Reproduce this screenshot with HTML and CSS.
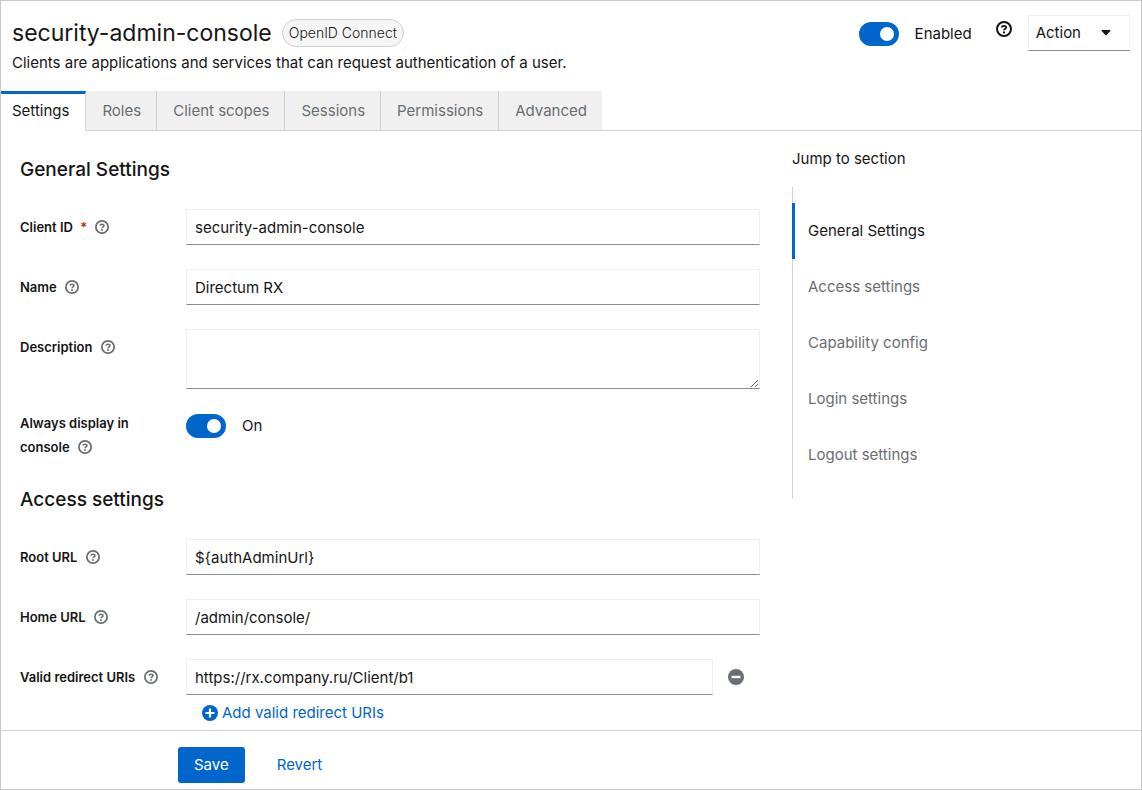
FILE: index.html
```html
<!DOCTYPE html>
<html lang="en">
<head>
    <meta charset="UTF-8">
    <meta name="viewport" content="width=device-width, initial-scale=1.0">
    <title>security-admin-console</title>
    <link rel="stylesheet" href="styles.css">
</head>
<body>
    <!-- Shared icons -->
    <svg class="sprite" aria-hidden="true">
        <symbol id="icon-help" viewBox="0 0 16 16">
            <circle cx="8" cy="8" r="7" fill="none" stroke="currentColor" stroke-width="2"/>
            <path d="M5.7 6.5C5.9 5.3 6.8 4.8 8 4.8c1.3 0 2.2.7 2.2 1.7C10.2 7.8 8 7.8 8 9.3" fill="none" stroke="currentColor" stroke-width="1.8"/>
            <circle cx="8" cy="11.4" r="1.1" fill="currentColor"/>
        </symbol>
        <symbol id="icon-plus" viewBox="0 0 16 16">
            <circle cx="8" cy="8" r="8" fill="currentColor"/>
            <path d="M8 3.5v9M3.5 8h9" stroke="#fff" stroke-width="2.2"/>
        </symbol>
        <symbol id="icon-minus" viewBox="0 0 16 16">
            <circle cx="8" cy="8" r="8" fill="currentColor"/>
            <path d="M3.5 8h9" stroke="#fff" stroke-width="2.4"/>
        </symbol>
    </svg>

    <div class="page">
        <header class="header">
            <div class="header-main">
                <div class="title-row">
                    <h1>security-admin-console</h1>
                    <span class="badge">OpenID Connect</span>
                </div>
                <p>Clients are applications and services that can request authentication of a user.</p>
            </div>
            <div class="header-tools">
                <label class="switch">
                    <input type="checkbox" checked>
                    <span>Enabled</span>
                </label>
                <button type="button" class="help help-large" aria-label="Help"><svg><use href="#icon-help"/></svg></button>
                <button type="button" class="action">Action
                    <svg viewBox="0 0 10 6"><path d="M0.8 0h8.4q.8 0 .3.8L5.7 5q-.7.7-1.4 0L.5.8Q0 0 .8 0z" fill="currentColor"/></svg>
                </button>
            </div>
        </header>

        <nav class="tabs">
            <a href="#settings" class="active">Settings</a>
            <a href="#roles">Roles</a>
            <a href="#scopes">Client scopes</a>
            <a href="#sessions">Sessions</a>
            <a href="#permissions">Permissions</a>
            <a href="#advanced">Advanced</a>
        </nav>

        <main class="content">
            <form id="client-form" class="form">
                <h2 id="general">General Settings</h2>

                <div class="row">
                    <div class="label">
                        <label for="client-id">Client ID <span class="required">*</span></label>
                        <button type="button" class="help" aria-label="Help for Client ID"><svg><use href="#icon-help"/></svg></button>
                    </div>
                    <input type="text" id="client-id" value="security-admin-console">
                </div>

                <div class="row">
                    <div class="label">
                        <label for="name">Name</label>
                        <button type="button" class="help" aria-label="Help for Name"><svg><use href="#icon-help"/></svg></button>
                    </div>
                    <input type="text" id="name" value="Directum RX">
                </div>

                <div class="row row-textarea">
                    <div class="label">
                        <label for="description">Description</label>
                        <button type="button" class="help" aria-label="Help for Description"><svg><use href="#icon-help"/></svg></button>
                    </div>
                    <textarea id="description"></textarea>
                </div>

                <div class="row row-switch">
                    <div class="label">
                        <label for="always-display">Always display in console</label>
                        <button type="button" class="help" aria-label="Help for Always display in console"><svg><use href="#icon-help"/></svg></button>
                    </div>
                    <label class="switch">
                        <input type="checkbox" id="always-display" checked>
                        <span>On</span>
                    </label>
                </div>

                <h2 id="access">Access settings</h2>

                <div class="row">
                    <div class="label">
                        <label for="root-url">Root URL</label>
                        <button type="button" class="help" aria-label="Help for Root URL"><svg><use href="#icon-help"/></svg></button>
                    </div>
                    <input type="text" id="root-url" value="${authAdminUrl}">
                </div>

                <div class="row">
                    <div class="label">
                        <label for="home-url">Home URL</label>
                        <button type="button" class="help" aria-label="Help for Home URL"><svg><use href="#icon-help"/></svg></button>
                    </div>
                    <input type="text" id="home-url" value="/admin/console/">
                </div>

                <div class="row">
                    <div class="label">
                        <label for="redirect-uri">Valid redirect URIs</label>
                        <button type="button" class="help" aria-label="Help for Valid redirect URIs"><svg><use href="#icon-help"/></svg></button>
                    </div>
                    <div>
                        <div class="uri">
                            <input type="text" id="redirect-uri" value="https://rx.company.ru/Client/b1">
                            <button type="button" class="remove" aria-label="Remove"><svg><use href="#icon-minus"/></svg></button>
                        </div>
                        <button type="button" class="add"><svg><use href="#icon-plus"/></svg>Add valid redirect URIs</button>
                    </div>
                </div>
            </form>

            <aside class="jump">
                <div class="jump-title">Jump to section</div>
                <nav class="jump-links">
                    <a href="#general" class="active">General Settings</a>
                    <a href="#access">Access settings</a>
                    <a href="#capability">Capability config</a>
                    <a href="#login">Login settings</a>
                    <a href="#logout">Logout settings</a>
                </nav>
            </aside>
        </main>

        <footer class="footer">
            <button type="submit" form="client-form" class="save">Save</button>
            <button type="reset" form="client-form" class="revert">Revert</button>
        </footer>
    </div>
</body>
</html>
```
FILE: styles.css
```css
* {
    box-sizing: border-box;
}
body {
    margin: 0;
    font-family: Inter, sans-serif;
    font-size: 15px;
    font-weight: 400;
    line-height: 24px;
    color: #151515;
}
h1, h2, p {
    margin: 0;
}
button, input, textarea {
    font: inherit;
    color: inherit;
}
button {
    padding: 0;
    border: none;
    background: none;
    cursor: pointer;
}
a {
    text-decoration: none;
}
svg {
    display: block;
    flex-shrink: 0;
    width: 16px;
    height: 16px;
}
.sprite {
    display: none;
}
.page {
    display: flex;
    flex-direction: column;
    height: 100vh;
    border: 1px solid #c8c8c8;
}

/* Header */
.header {
    display: flex;
    justify-content: space-between;
    padding: 14px 11px 16px;
}
.title-row {
    display: flex;
    align-items: center;
    gap: 10px;
    height: 36px;
}
h1 {
    font-size: 23px;
    font-weight: 400;
    line-height: 32px;
}
.badge {
    padding: 1px 6px;
    border: 1px solid #d2d2d2;
    border-radius: 15px;
    background: #f5f5f5;
    font-size: 14px;
    font-weight: 300;
}
.header-tools {
    display: flex;
    align-items: flex-start;
}
.header-tools .switch {
    margin-top: 7px;
}
.switch {
    display: flex;
    align-items: center;
    gap: 16px;
}
.switch input {
    appearance: none;
    display: flex;
    align-items: center;
    width: 40px;
    height: 24px;
    margin: 0;
    padding: 0 5px;
    border-radius: 12px;
    background: #8a8d90;
}
.switch input::before {
    content: "";
    width: 14px;
    height: 14px;
    border-radius: 50%;
    background: #fff;
}
.switch input:checked {
    justify-content: flex-end;
    background: #06c;
}
.help {
    color: #6a6e73;
}
.help svg {
    width: 14px;
    height: 14px;
}
.help-large {
    margin: 6px 16px 0 24px;
    color: #151515;
}
.help-large svg {
    width: 16px;
    height: 16px;
}
.action {
    display: flex;
    align-items: center;
    gap: 20px;
    height: 36px;
    padding: 0 18px 0 7px;
    border: 1px solid #f0f0f0;
    border-bottom-color: #8a8d90;
}
.action svg {
    width: 10px;
    height: 6px;
}

/* Tabs */
.tabs {
    display: flex;
    box-shadow: inset 0 -1px #d2d2d2;
}
.tabs a {
    height: 40px;
    padding: 8px 15px 8px 16px;
    border-right: 1px solid #d2d2d2;
    border-bottom: 1px solid #d2d2d2;
    background: #f0f0f0;
    color: #6a6e73;
}
.tabs a:last-child {
    border-right: none;
}
.tabs .active {
    padding: 5px 16px 8px 11px;
    border-top: 3px solid #06c;
    border-bottom: none;
    background: #fff;
    color: #151515;
}

/* Form */
.content {
    display: flex;
    flex: 1;
    gap: 32px;
    min-height: 0;
    padding: 0 16px 0 19px;
    overflow: hidden;
}
.form {
    flex: 1;
    padding-top: 22px;
}
h2 {
    margin-bottom: 22px;
    font-size: 19px;
    font-weight: 500;
    line-height: 34px;
}
.row {
    display: grid;
    grid-template-columns: 134px 1fr;
    column-gap: 32px;
    margin-bottom: 24px;
}
.row-textarea {
    margin-bottom: 22px;
}
.label {
    padding-top: 6px;
    font-size: 13px;
    font-weight: 600;
    white-space: nowrap;
}
.label .help {
    margin-left: 5px;
    vertical-align: -2px;
}
.required {
    margin-left: 4px;
    color: #c9190b;
}
.form input[type="text"], textarea {
    display: block;
    width: 100%;
    height: 36px;
    padding: 0 8px;
    border: 1px solid #f0f0f0;
    border-bottom-color: #8a8d90;
    background: #fff;
}
.form textarea {
    height: 60px;
    resize: vertical;
}
.row-switch .label {
    padding-top: 0;
    white-space: normal;
}
.row-switch .switch {
    align-self: start;
    padding-top: 3px;
}
.uri {
    display: flex;
    align-items: center;
    gap: 15px;
    padding-right: 16px;
}
.remove {
    color: #6a6e73;
}
.add {
    display: flex;
    align-items: center;
    gap: 4px;
    padding: 6px 16px;
    color: #06c;
}

/* Jump links */
.jump {
    flex: 0 0 333px;
    padding-top: 16px;
}
.jump-links {
    display: flex;
    flex-direction: column;
    margin-top: 16px;
    padding: 16px 0;
    box-shadow: inset 1px 0 #d2d2d2;
}
.jump-links a {
    padding: 16px;
    color: #6a6e73;
}
.jump-links .active {
    padding-left: 13px;
    border-left: 3px solid #06c;
    color: #151515;
}

/* Footer */
.footer {
    display: flex;
    gap: 16px;
    padding: 16px 16px 6px 177px;
    border-top: 1px solid #d2d2d2;
}
.footer button {
    padding: 6px 16px;
    border-radius: 3px;
    color: #06c;
}
.footer .save {
    background: #06c;
    color: #fff;
}
```
